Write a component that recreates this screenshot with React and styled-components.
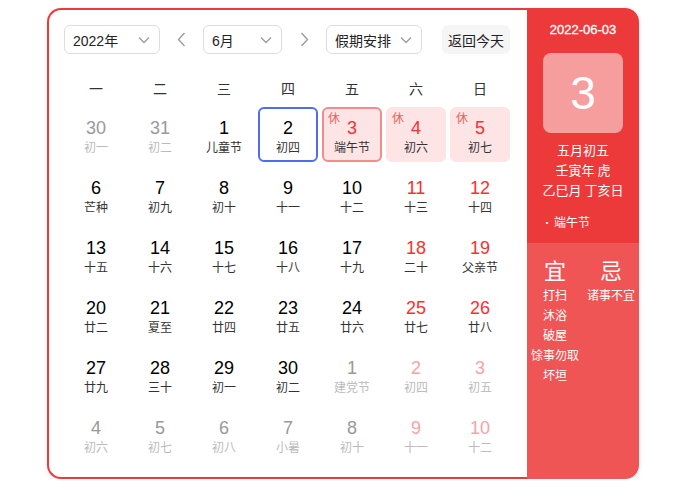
import React from "react";
import styled, { createGlobalStyle } from "styled-components";

const Global = createGlobalStyle`
  html, body { margin: 0; padding: 0; background: #fff; }
  body { font-family: "Liberation Sans", "Noto Sans CJK SC", Arial, sans-serif; }
  * { box-sizing: border-box; }
`;

const Page = styled.div`
  padding: 8px 0 0 47px;
`;

const Card = styled.div`
  display: flex;
  width: 592px;
  height: 471px;
  border-radius: 14px;
  box-shadow: 0 2px 6px rgba(0, 0, 0, 0.08);
`;

const Main = styled.div`
  width: 480px;
  border: 2px solid #ec3a3b;
  border-right: 0;
  border-radius: 14px 0 0 14px;
  background: #fff;
  padding: 15px 0 0 15px;
`;

const Toolbar = styled.div`
  display: flex;
  align-items: center;
  height: 29px;
`;

const Select = styled.div`
  width: ${(p) => p.$w}px;
  height: 29px;
  border: 1px solid #dcdde1;
  border-radius: 6px;
  display: flex;
  align-items: center;
  justify-content: space-between;
  padding: 0 9px 0 8px;
  font-size: 14px;
  color: #222;
  font-family: "Liberation Sans", "Noto Sans CJK SC", sans-serif;
`;

const ArrowBtn = styled.div`
  width: ${(p) => p.$w}px;
  display: flex;
  justify-content: center;
  align-items: center;
  height: 29px;
`;

const TodayBtn = styled.div`
  margin-left: 20px;
  width: 68px;
  height: 29px;
  border-radius: 6px;
  background: #f5f5f6;
  display: flex;
  align-items: center;
  justify-content: center;
  font-size: 14px;
  color: #222;
  font-family: "Noto Sans CJK SC", sans-serif;
`;

const Week = styled.div`
  display: grid;
  grid-template-columns: repeat(7, 60px);
  column-gap: 4px;
  margin: 14px 0 0 2px;
  height: 39px;
  align-items: center;
  font-family: "Noto Sans CJK SC", sans-serif;
  font-size: 14px;
  color: #333;
  text-align: center;
`;

const Grid = styled.div`
  display: grid;
  grid-template-columns: repeat(7, 60px);
  grid-auto-rows: 55px;
  gap: 5px 4px;
  margin-left: 2px;
`;

const Cell = styled.div`
  position: relative;
  display: flex;
  flex-direction: column;
  align-items: center;
  justify-content: center;
  padding-top: 3px;
  border-radius: 6px;
  background: ${(p) => (p.$rest ? "#fde4e5" : "transparent")};
  border: 2px solid
    ${(p) => (p.$today ? "#4e6ef2" : p.$selected ? "#f28c8d" : "transparent")};
`;

const Num = styled.div`
  font-family: "Liberation Sans", Arial, sans-serif;
  font-size: 18px;
  line-height: 20px;
  color: ${(p) => p.$c};
`;

const Lunar = styled.div`
  font-family: "Noto Sans CJK SC", sans-serif;
  font-size: 12px;
  line-height: 17px;
  color: ${(p) => p.$c};
`;

const Rest = styled.span`
  position: absolute;
  top: 1px;
  left: 4px;
  font-family: "Noto Sans CJK SC", sans-serif;
  font-size: 12px;
  line-height: 16px;
  color: #f25f62;
`;

const Side = styled.div`
  width: 112px;
  border-radius: 0 14px 14px 0;
  overflow: hidden;
  display: flex;
  flex-direction: column;
  color: #fff;
`;

const SideTop = styled.div`
  height: 235px;
  background: #ec3a3b;
  display: flex;
  flex-direction: column;
  align-items: center;
  padding-top: 13px;
  font-family: "Noto Sans CJK SC", sans-serif;
`;

const DateLine = styled.div`
  font-family: "Liberation Sans", Arial, sans-serif;
  font-size: 13px;
  line-height: 18px;
  -webkit-text-stroke: 0.3px #fff;
`;

const BigBox = styled.div`
  margin-top: 14px;
  width: 80px;
  height: 80px;
  border-radius: 8px;
  background: rgba(255, 255, 255, 0.5);
  display: flex;
  align-items: center;
  justify-content: center;
  font-family: "Liberation Sans", Arial, sans-serif;
  font-size: 46px;
`;

const InfoLine = styled.div`
  font-size: 13px;
  line-height: 20px;
  margin-top: ${(p) => p.$mt || 0}px;
`;

const Fest = styled.div`
  align-self: stretch;
  padding-left: 15px;
  margin-top: 13px;
  font-size: 12px;
  line-height: 18px;
`;

const Dot = styled.span`
  font-size: 10px;
  margin-right: 2px;
`;

const SideBottom = styled.div`
  flex: 1;
  background: #f05556;
  display: grid;
  grid-template-columns: 56px 56px;
  align-content: start;
  padding-top: 12px;
  font-family: "Noto Sans CJK SC", sans-serif;
`;

const Col = styled.div`
  display: flex;
  flex-direction: column;
  align-items: center;
`;

const Big = styled.div`
  font-size: 22px;
  line-height: 28px;
  margin-bottom: 2px;
`;

const Item = styled.div`
  font-size: 12px;
  line-height: 20px;
  white-space: nowrap;
`;

const Chevron = () => (
  <svg width="12" height="8" viewBox="0 0 12 8" fill="none">
    <path d="M1 1.5l5 5 5-5" stroke="#9a9ca3" strokeWidth="1.3" />
  </svg>
);

const Arrow = ({ dir }) => (
  <svg width="9" height="15" viewBox="0 0 9 15" fill="none">
    <path
      d={dir === "l" ? "M7.5 1L1.5 7.5l6 6.5" : "M1.5 1l6 6.5-6 6.5"}
      stroke="#9a9ca3"
      strokeWidth="1.4"
    />
  </svg>
);

const rows = [
  [[30, "初一", 0], [31, "初二", 0], [1, "儿童节"], [2, "初四"], [3, "端午节"], [4, "初六"], [5, "初七"]],
  [[6, "芒种"], [7, "初九"], [8, "初十"], [9, "十一"], [10, "十二"], [11, "十三"], [12, "十四"]],
  [[13, "十五"], [14, "十六"], [15, "十七"], [16, "十八"], [17, "十九"], [18, "二十"], [19, "父亲节"]],
  [[20, "廿二"], [21, "夏至"], [22, "廿四"], [23, "廿五"], [24, "廿六"], [25, "廿七"], [26, "廿八"]],
  [[27, "廿九"], [28, "三十"], [29, "初一"], [30, "初二"], [1, "建党节", 0], [2, "初四", 0], [3, "初五", 0]],
  [[4, "初六", 0], [5, "初七", 0], [6, "初八", 0], [7, "小暑", 0], [8, "初十", 0], [9, "十一", 0], [10, "十二", 0]],
];

export default function App() {
  return (
    <>
      <Global />
      <Page>
        <Card>
          <Main>
            <Toolbar>
              <Select $w={96}>
                <span>2022年</span>
                <Chevron />
              </Select>
              <ArrowBtn $w={43}>
                <Arrow dir="l" />
              </ArrowBtn>
              <Select $w={79}>
                <span>6月</span>
                <Chevron />
              </Select>
              <ArrowBtn $w={44}>
                <Arrow dir="r" />
              </ArrowBtn>
              <Select $w={96}>
                <span>假期安排</span>
                <Chevron />
              </Select>
              <TodayBtn>返回今天</TodayBtn>
            </Toolbar>
            <Week>
              {["一", "二", "三", "四", "五", "六", "日"].map((d) => (
                <div key={d}>{d}</div>
              ))}
            </Week>
            <Grid>
              {rows.map((r, ri) =>
                r.map(([n, l, cur], ci) => {
                  const inMonth = cur !== 0;
                  const weekend = ci >= 5;
                  const rest = ri === 0 && ci >= 4;
                  const today = ri === 0 && ci === 3;
                  const selected = ri === 0 && ci === 4;
                  let nc = "#000";
                  let lc = "#333";
                  if (!inMonth) {
                    nc = weekend ? "#f9a3a4" : "#999";
                    lc = "#bbb";
                  } else if (weekend || rest) {
                    nc = "#f73131";
                  }
                  return (
                    <Cell key={ri + "-" + ci} $rest={rest} $today={today} $selected={selected}>
                      {rest && <Rest>休</Rest>}
                      <Num $c={nc}>{n}</Num>
                      <Lunar $c={lc}>{l}</Lunar>
                    </Cell>
                  );
                })
              )}
            </Grid>
          </Main>
          <Side>
            <SideTop>
              <DateLine>2022-06-03</DateLine>
              <BigBox>3</BigBox>
              <InfoLine $mt={7}>五月初五</InfoLine>
              <InfoLine>壬寅年 虎</InfoLine>
              <InfoLine>乙巳月 丁亥日</InfoLine>
              <Fest>
                <Dot>•</Dot>端午节
              </Fest>
            </SideTop>
            <SideBottom>
              <Col>
                <Big>宜</Big>
                <Item>打扫</Item>
                <Item>沐浴</Item>
                <Item>破屋</Item>
                <Item>馀事勿取</Item>
                <Item>坏垣</Item>
              </Col>
              <Col>
                <Big>忌</Big>
                <Item>诸事不宜</Item>
              </Col>
            </SideBottom>
          </Side>
        </Card>
      </Page>
    </>
  );
}
